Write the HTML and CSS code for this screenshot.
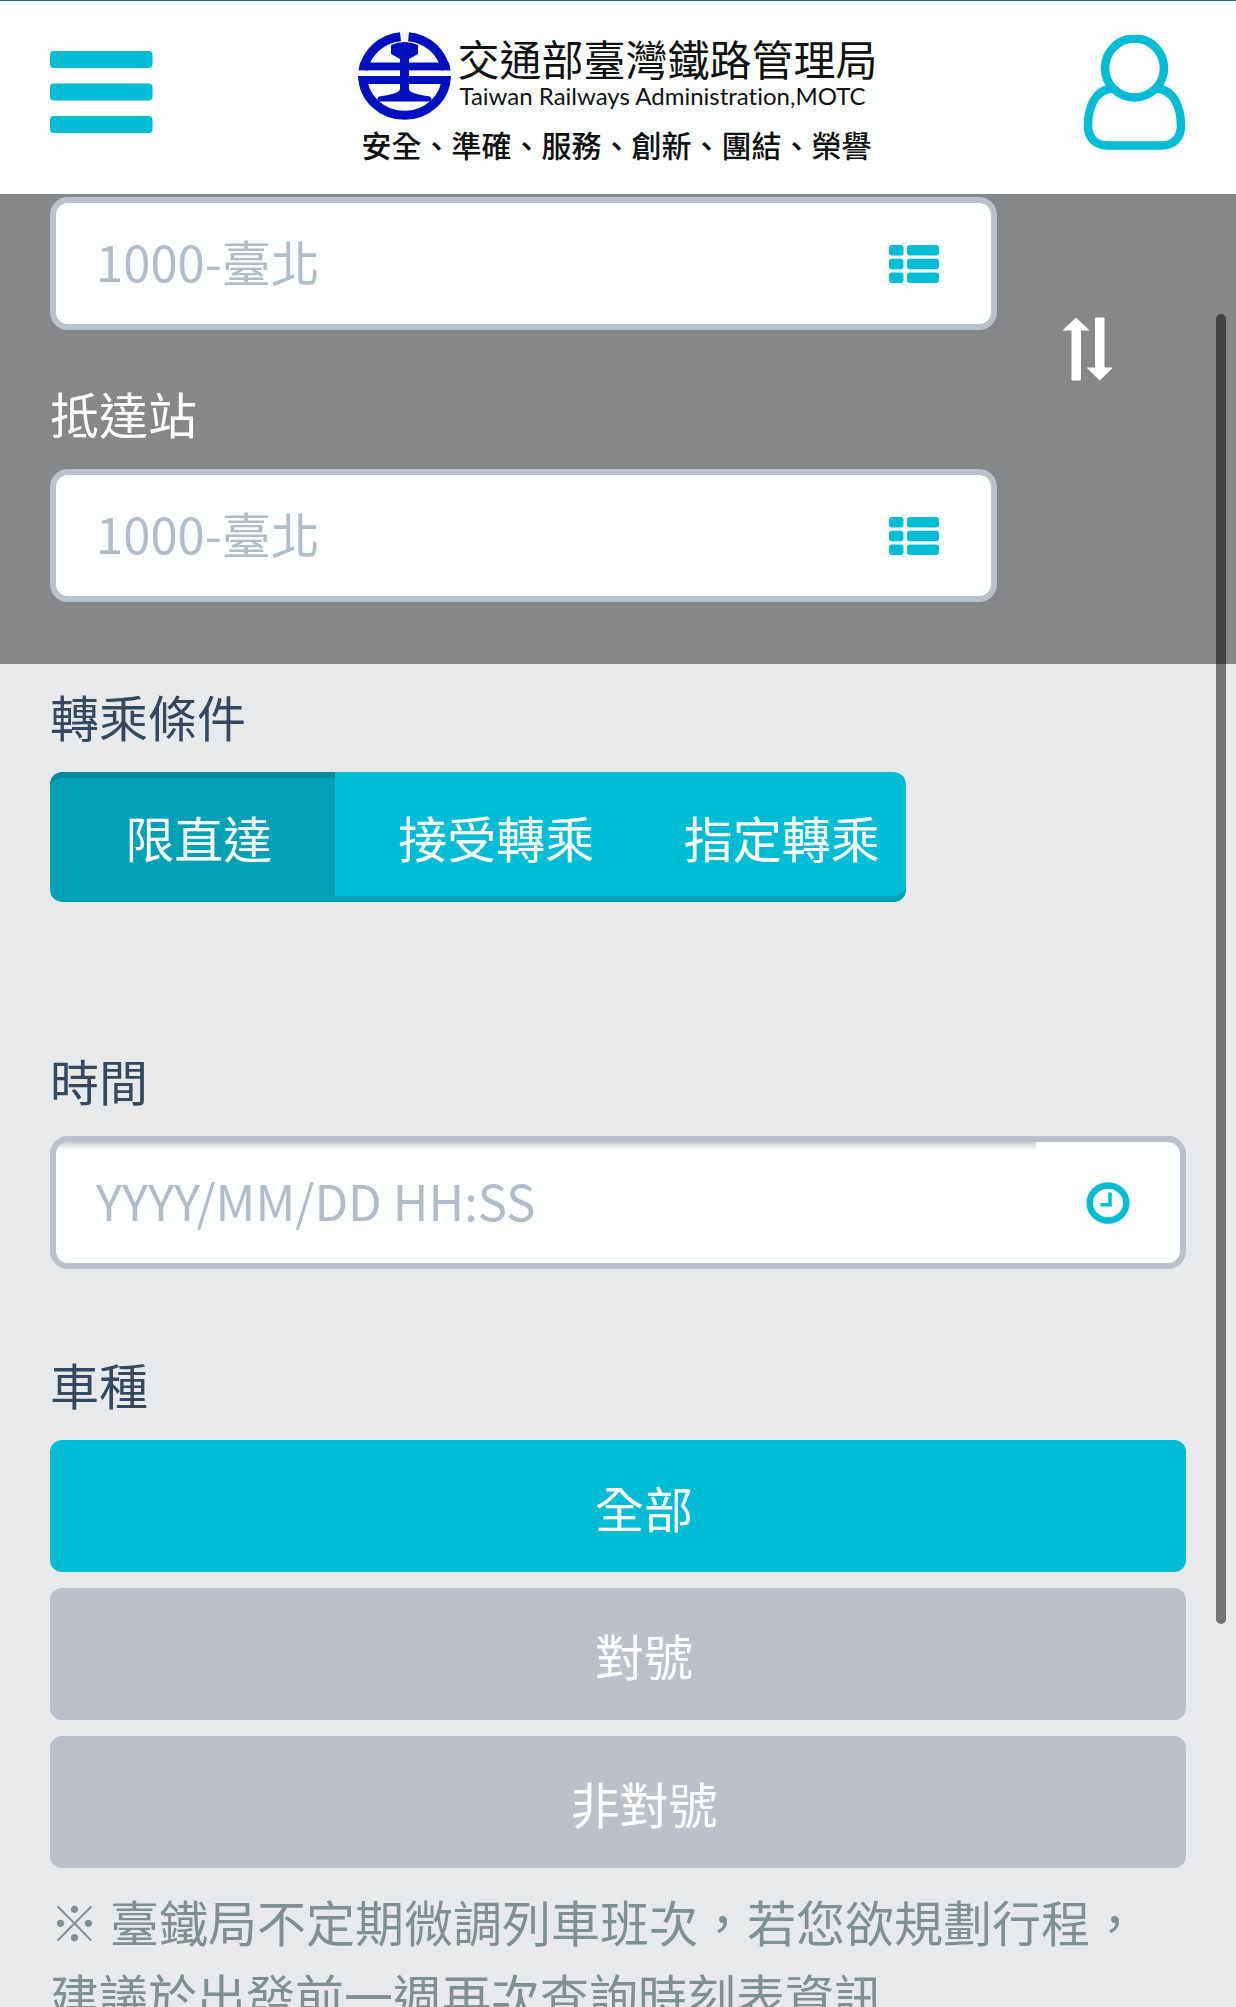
FILE: index.html
```html
<!DOCTYPE html>
<html lang="zh-Hant">
<head>
<meta charset="utf-8">
<meta name="viewport" content="width=device-width, initial-scale=1">
<title>交通部臺灣鐵路管理局</title>
<link rel="stylesheet" href="styles.css">
</head>
<body>
<header class="topbar">
  <button class="icon-button" type="button" aria-label="選單">
    <svg width="103" height="82" viewBox="0 0 103 82" fill="#00bcd4" aria-hidden="true">
      <rect width="102.5" height="17" rx="4"/>
      <rect y="32.5" width="102.5" height="17" rx="4"/>
      <rect y="65" width="102.5" height="17" rx="4"/>
    </svg>
  </button>
  <a class="logo" href="#">
    <span class="logo-main">
      <svg width="93" height="88" viewBox="0 0 93 88" aria-hidden="true">
        <g fill="none" stroke="#0010bf" stroke-width="9">
          <path d="M42.500 4.700A42 39.300 0 0 0 5.500 38"/>
          <path d="M50.500 4.700A42 39.300 0 0 1 87.500 38"/>
          <path d="M4.800 44A41.700 39.300 0 0 0 88.200 44"/>
        </g>
        <g fill="#0010bf">
          <path d="M2 30.500H91L92.500 38.500H.500Z"/>
          <path d="M0 44H93L91.500 52H1.500Z"/>
        </g>
        <path d="M0 41.200H93" stroke="#fff" stroke-width="5"/>
        <path d="M33 13Q46.500 7 60 13V22L51 27V57Q51 61.500 72 64.500Q75 67 72 69.500H21Q18 67 21 64.500Q42 61.500 42 57V27L33 22Z" fill="#0010bf"/>
      </svg>
      <span class="logo-names">
        <span class="logo-zh">交通部臺灣鐵路管理局</span>
        <span class="logo-en">Taiwan Railways Administration,MOTC</span>
      </span>
    </span>
    <span class="logo-slogan">安全、準確、服務、創新、團結、榮譽</span>
  </a>
  <button class="icon-button" type="button" aria-label="會員">
    <svg width="103" height="115" viewBox="0 0 103 115" fill="none" stroke="#00bcd4" stroke-width="8.500" aria-hidden="true">
      <circle cx="51.500" cy="33" r="29.500"/>
      <path d="M30 53.500C12 54 5 73 5 91C5 103 13 110.500 24 110.500H79C90 110.500 98 103 98 91C98 73 91 54 73 53.500"/>
    </svg>
  </button>
</header>

<main class="content">
  <form>
    <section class="stations">
      <div class="station-fields">
        <div class="field">
          <input class="field-input" type="text" placeholder="1000-臺北" aria-label="出發站">
          <button class="field-button station-button" type="button" aria-label="選擇出發站">
            <svg width="50" height="38" viewBox="0 0 50 38" fill="#00bcd4" aria-hidden="true">
              <rect width="14.500" height="10.500" rx="3"/><rect x="18" width="32" height="10.500" rx="3"/>
              <rect y="13.700" width="14.500" height="10.500" rx="3"/><rect x="18" y="13.700" width="32" height="10.500" rx="3"/>
              <rect y="27.400" width="14.500" height="10.500" rx="3"/><rect x="18" y="27.400" width="32" height="10.500" rx="3"/>
            </svg>
          </button>
        </div>
        <label class="label label-light" for="arrive">抵達站</label>
        <div class="field">
          <input class="field-input" id="arrive" type="text" placeholder="1000-臺北">
          <button class="field-button station-button" type="button" aria-label="選擇抵達站">
            <svg width="50" height="38" viewBox="0 0 50 38" fill="#00bcd4" aria-hidden="true">
              <rect width="14.500" height="10.500" rx="3"/><rect x="18" width="32" height="10.500" rx="3"/>
              <rect y="13.700" width="14.500" height="10.500" rx="3"/><rect x="18" y="13.700" width="32" height="10.500" rx="3"/>
              <rect y="27.400" width="14.500" height="10.500" rx="3"/><rect x="18" y="27.400" width="32" height="10.500" rx="3"/>
            </svg>
          </button>
        </div>
      </div>
      <button class="icon-button swap" type="button" aria-label="交換車站">
        <svg width="50" height="64" viewBox="0 0 50 64" fill="#fff" stroke="#fff" stroke-linejoin="round" aria-hidden="true">
          <path d="M13 1L25.500 13H17.500V63H9V13H.500Z"/>
          <path d="M32.500 1H41V51H49L36.700 63L24.500 51H32.500Z"/>
        </svg>
      </button>
    </section>

    <section class="options">
      <fieldset class="group">
        <legend class="label">轉乘條件</legend>
        <div class="segments">
          <label class="segment"><input type="radio" name="transfer" checked>限直達</label>
          <label class="segment"><input type="radio" name="transfer">接受轉乘</label>
          <label class="segment"><input type="radio" name="transfer">指定轉乘</label>
        </div>
      </fieldset>

      <div class="group group-time">
        <label class="label" for="time">時間</label>
        <div class="field">
          <input class="field-input field-inset" id="time" type="text" placeholder="YYYY/MM/DD HH:SS">
          <button class="field-button" type="button" aria-label="選擇時間">
            <svg width="44" height="42" viewBox="0 0 44 42" fill="none" stroke="#00bcd4" aria-hidden="true">
              <ellipse cx="22" cy="21" rx="18.300" ry="17.500" stroke-width="6.500"/>
              <path d="M24 10.500V22.700H14.500" stroke-width="3.500"/>
            </svg>
          </button>
        </div>
      </div>

      <fieldset class="group group-type">
        <legend class="label">車種</legend>
        <div class="choices">
          <label class="choice"><input type="radio" name="type" checked>全部</label>
          <label class="choice"><input type="radio" name="type">對號</label>
          <label class="choice"><input type="radio" name="type">非對號</label>
        </div>
      </fieldset>

      <p class="note">※ 臺鐵局不定期微調列車班次，若您欲規劃行程，建議於出發前一週再次查詢時刻表資訊</p>
    </section>
  </form>
  <div class="scroll-thumb"></div>
</main>
</body>
</html>
```

FILE: styles.css
```css
* {
  box-sizing: border-box;
}

body {
  display: flex;
  flex-direction: column;
  height: 100vh;
  margin: 0;
  overflow: hidden;
  background: #e8e9eb;
  color: #34495e;
  font-family: "Noto Sans CJK TC", sans-serif;
  font-size: 49px;
  line-height: 74px;
}

button,
input {
  font: inherit;
}

/* Header */
.topbar {
  display: flex;
  flex: none;
  align-items: flex-start;
  justify-content: space-between;
  height: 194px;
  padding: 31px 50px 0;
  border-top: 1px solid #2a6f78;
  background: #fdfefe;
}

.icon-button {
  display: flex;
  align-items: center;
  justify-content: center;
  height: 120px;
  padding: 0;
  border: 0;
  background: none;
  cursor: pointer;
}

.logo {
  color: #111;
  text-decoration: none;
}

.logo-main {
  display: flex;
  gap: 6px;
}

.logo-names {
  display: flex;
  flex-direction: column;
  padding-top: 4px;
}

.logo-zh {
  font-size: 42px;
  line-height: 44px;
}

.logo-en {
  padding-left: 2px;
  font-family: Lato, sans-serif;
  font-size: 24px;
  font-variant-ligatures: none;
  line-height: 32px;
  white-space: nowrap;
}

.logo-slogan {
  display: block;
  padding-left: 3px;
  font-size: 30px;
  font-weight: 500;
  line-height: 48px;
}

/* Scrolling area */
.content {
  position: relative;
  flex: 1;
  min-height: 0;
  overflow: hidden;
}

.scroll-thumb {
  position: absolute;
  top: 120px;
  right: 10px;
  width: 10px;
  height: 1310px;
  border-radius: 5px;
  background: rgba(0, 0, 0, 0.5);
}

/* Stations */
.stations {
  display: grid;
  grid-template-columns: 5fr 1fr;
  padding: 3px 50px 62px;
  background: #868788;
}

.swap {
  width: 100%;
  height: 304px;
  padding-right: 6px;
}

.label {
  display: block;
  margin-bottom: 19px;
  padding: 0;
}

.label-light {
  margin-top: 46px;
  color: #fff;
}

.field {
  display: flex;
  height: 133px;
  overflow: hidden;
  border: 6px solid #bbc1ca;
  border-radius: 18px;
  background: #fdfefe;
}

.field-input {
  flex: 1;
  min-width: 0;
  padding: 0 40px 6px;
  border: 0;
  outline: 0;
  background: transparent;
  color: #34495e;
}

.field-input::placeholder {
  color: #b2bcc8;
  opacity: 1;
}

.field-inset {
  background: linear-gradient(rgba(0, 0, 0, 0.2), transparent 8px);
}

.field-button {
  display: flex;
  flex: none;
  align-items: center;
  justify-content: center;
  width: 144px;
  padding: 0;
  border: 0;
  background: none;
  cursor: pointer;
}

.station-button {
  width: 153px;
}

/* Search options */
.options {
  padding: 15px 50px 0;
}

.group {
  min-width: 0;
  margin: 0;
  padding: 0;
  border: 0;
}

.group-time {
  margin-top: 141px;
}

.group-type {
  margin-top: 78px;
}

.segments {
  display: grid;
  grid-template-columns: repeat(3, 1fr);
  max-width: 856px;
  overflow: hidden;
  border-radius: 12px;
}

.segment,
.choice {
  position: relative;
  color: #fff;
  text-align: center;
  white-space: nowrap;
  cursor: pointer;
}

.segment input,
.choice input {
  position: absolute;
  opacity: 0;
}

.segment {
  min-width: 0;
  height: 130px;
  padding: 0 51px 0 63px;
  background: #00bcd4;
  box-shadow: inset 0 -6px #00a0b7;
  line-height: 130px;
}

.segment:first-child {
  border-radius: 12px 0 0 12px;
}

.segment:last-child {
  border-radius: 0 12px 12px 0;
}

.segment:has(:checked) {
  background: #00a0b7;
  box-shadow: inset 0 6px #008a9a;
}

.choices {
  display: grid;
  gap: 16px;
}

.choice {
  height: 132px;
  padding: 0 12px 0 64px;
  border-radius: 12px;
  background: #bcc1c9;
  line-height: 134px;
}

.choice:has(:checked) {
  background: #00bcd4;
}

.note {
  margin: 16px 0 0;
  color: #7f908f;
}
```
